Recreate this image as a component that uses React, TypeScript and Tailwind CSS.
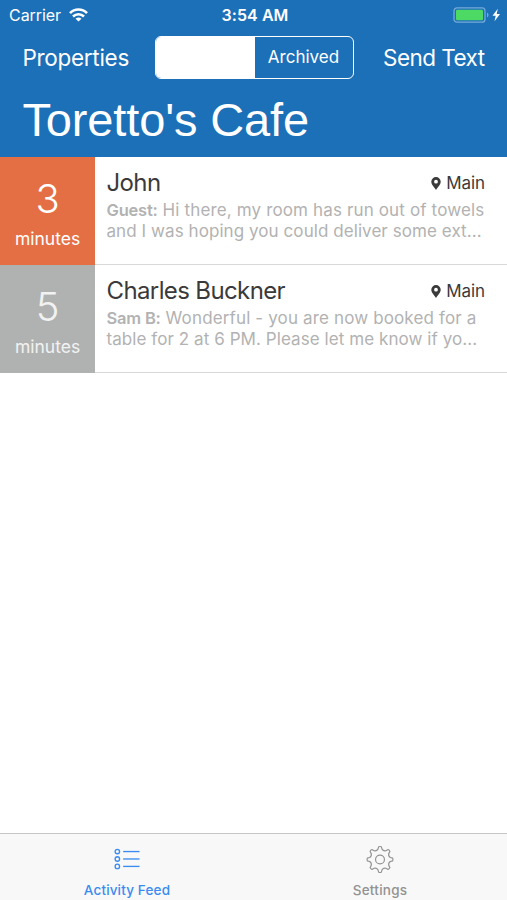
import { useState } from 'react';

type Conversation = {
  id: number;
  time: number;
  name: string;
  sender: string;
  lines: string[];
  location: string;
  color: string;
};

const conversations: Conversation[] = [
  {
    id: 1,
    time: 3,
    name: 'John',
    sender: 'Guest:',
    lines: ['Hi there, my room has run out of towels', 'and I was hoping you could deliver some ext...'],
    location: 'Main',
    color: 'bg-[#e56f45] text-white',
  },
  {
    id: 2,
    time: 5,
    name: 'Charles Buckner',
    sender: 'Sam B:',
    lines: ['Wonderful - you are now booked for a', 'table for 2 at 6 PM. Please let me know if yo...'],
    location: 'Main',
    color: 'bg-[#b0b2b1] text-[#f2f2f2]',
  },
];

// outline of an eight toothed gear centered on 15,15
const gearPath = () => {
  const point = (r: number, deg: number) => {
    const a = (deg * Math.PI) / 180;
    return `${(15 + r * Math.cos(a)).toFixed(2)} ${(15 + r * Math.sin(a)).toFixed(2)}`;
  };
  let d = `M${point(13.2, -6)}`;
  for (let i = 0; i < 8; i++) {
    const t = i * 45;
    d += `Q${point(13.7, t)} ${point(13.2, t + 6)}L${point(10.9, t + 11)}Q${point(9.1, t + 22.5)} ${point(10.9, t + 34)}L${point(13.2, t + 39)}`;
  }
  return d + 'Z';
};

const StatusBar = () => (
  <div className="flex h-[30px] items-center pl-[9px] pr-[6px] text-[16px]">
    <div className="flex flex-1 items-center gap-[8px]">
      <span className="tracking-[-0.05px]">Carrier</span>
      <svg width="19" height="14" viewBox="0 0 19 14" fill="none" stroke="currentColor" strokeWidth="2.6">
        <path d="M1 5.1a12 12 0 0 1 17 0" />
        <path d="M4 8.5a7.8 7.8 0 0 1 11 0" />
        <path d="M9.5 13.5L6.5 10.7a4.6 4.6 0 0 1 6 0Z" fill="currentColor" stroke="none" />
      </svg>
    </div>
    <span className="font-semibold tracking-[0.05px]">3:54 AM</span>
    <div className="flex flex-1 items-center justify-end">
      <svg width="48" height="16" viewBox="0 0 48 16">
        <rect x="1" y="0.8" width="31" height="14.4" rx="3" fill="none" stroke="#74a9d8" strokeWidth="1.3" />
        <rect x="3" y="2.8" width="27" height="10.4" rx="1.2" fill="#4cd964" />
        <path d="M34 5.5c2 .8 2 4.2 0 5Z" fill="#74a9d8" />
        <path d="M44.8 1.8L39.5 8.7h3.2l-1.2 5.5 5.5-7.2h-3.3Z" fill="#fff" />
      </svg>
    </div>
  </div>
);

const Row = ({ item }: { item: Conversation }) => (
  <li className="flex h-[108px]">
    <div className={`flex w-[95px] flex-col items-center ${item.color}`}>
      <span className="mt-[18px] text-[40px] font-light leading-[48px]">{item.time}</span>
      <span className="mt-[5px] text-[17.5px] leading-[22px]">minutes</span>
    </div>
    <div className="flex-1 border-b border-[#d9d9db] pl-[11.5px] pr-[22px] pt-[11px]">
      <div className="flex items-center justify-between leading-[30px] text-[#3a3a3a]">
        <h2 className="text-[24px] tracking-[-0.62px]">{item.name}</h2>
        <span className="flex items-center gap-[5px] text-[17px] tracking-[-0.05px]">
          <svg width="10" height="13" viewBox="0 0 10 13">
            <path fillRule="evenodd" fill="currentColor" d="M5 0a4.7 4.7 0 0 1 4.7 4.7C9.7 7.5 6.5 10.5 5 13 3.5 10.5.3 7.5.3 4.7A4.7 4.7 0 0 1 5 0Zm0 2.8a1.9 1.9 0 1 0 0 3.8 1.9 1.9 0 0 0 0-3.8Z" />
          </svg>
          {item.location}
        </span>
      </div>
      <p className="mt-[2px] whitespace-nowrap text-[17px] leading-[21px] tracking-[0.07px] text-[#b2b2b2]">
        <b className="text-[16.5px] font-semibold tracking-[-0.2px]">{item.sender}</b>
        <span className="tracking-[0.14px]"> {item.lines[0]}</span>
        <br />
        {item.lines[1]}
      </p>
    </div>
  </li>
);

const App = () => {
  const [tab, setTab] = useState('feed');

  return (
    <div className="flex h-[900px] w-[507px] flex-col overflow-hidden bg-white font-['Inter','Liberation_Sans',sans-serif]">
      <header className="h-[157px] bg-[#1c70b8] text-white">
        <StatusBar />
        <nav className="flex h-[55px] items-center pl-[22.5px] text-[22.5px]">
          <button className="w-[132px] whitespace-nowrap text-left tracking-[-0.3px]">Properties</button>
          <div className="flex h-[43px] w-[199px] overflow-hidden rounded-[6px] border-[1.5px] border-white text-[17px]">
            <div className="w-[99px] bg-white" />
            <button className="flex-1 pt-[1px] tracking-[0px]">Archived</button>
          </div>
          <button className="ml-[29.5px] whitespace-nowrap text-left tracking-[-0.55px]">Send Text</button>
        </nav>
        <h1 className="pl-[22.5px] pt-[1px] font-['Liberation_Sans',sans-serif] text-[47px] leading-[68px] tracking-[-0.15px]">
          Toretto's Cafe
        </h1>
      </header>

      <ul className="flex-1">
        {conversations.map((item) => (
          <Row key={item.id} item={item} />
        ))}
      </ul>

      <footer className="flex h-[67px] border-t border-[#c6c6c8] bg-[#f8f8f8] text-[13.5px] font-medium">
        <button
          onClick={() => setTab('feed')}
          className={`flex w-[254px] flex-col items-center pt-[11px] ${tab === 'feed' ? 'text-[#3a8cf0]' : 'text-[#929292]'}`}
        >
          <svg width="28" height="28" viewBox="0 0 28 28" fill="none" stroke="currentColor" strokeWidth="1.4">
            {[6.8, 14.5, 22.2].map((y) => (
              <g key={y}>
                <circle cx="4" cy={y} r="2.3" />
                <path d={`M10 ${y}H27`} />
              </g>
            ))}
          </svg>
          <span className="mt-[8px] leading-[20px] tracking-[0.15px]">Activity Feed</span>
        </button>
        <button
          onClick={() => setTab('settings')}
          className={`flex w-[252px] flex-col items-center pt-[11px] ${tab === 'settings' ? 'text-[#3a8cf0]' : 'text-[#929292]'}`}
        >
          <svg width="30" height="30" viewBox="0 0 30 30" fill="none" stroke="currentColor" strokeWidth="1.2" strokeLinejoin="round">
            <path d={gearPath()} />
            <circle cx="15" cy="15" r="4.6" />
          </svg>
          <span className="mt-[6px] leading-[20px] tracking-[0.25px]">Settings</span>
        </button>
      </footer>
    </div>
  );
};

export default App;
